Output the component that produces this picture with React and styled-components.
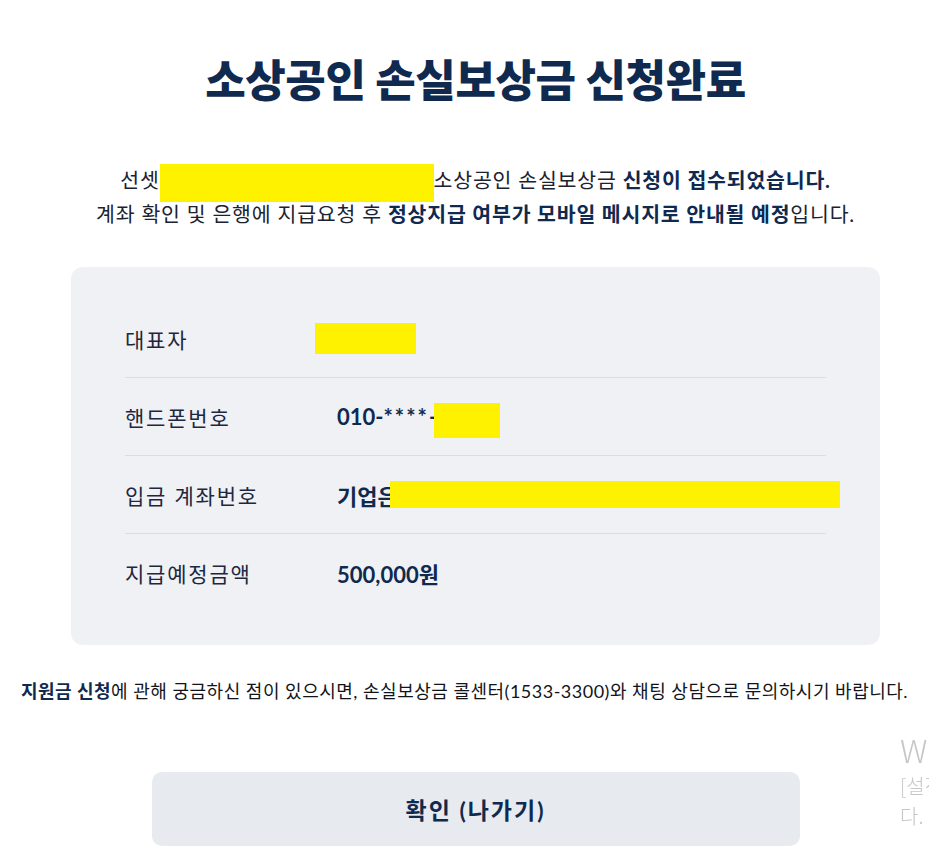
import React from "react";
import styled, { createGlobalStyle } from "styled-components";

const Global = createGlobalStyle`
  html, body {
    margin: 0;
    padding: 0;
    background: #ffffff;
    overflow: hidden;
  }
  body {
    font-family: "Lato", "Noto Sans CJK KR", sans-serif;
    color: #1b2230;
    -webkit-font-smoothing: antialiased;
  }
`;

const Page = styled.div`
  width: 929px;
  height: 863px;
  padding-top: 52px;
  box-sizing: border-box;
  display: flex;
  flex-direction: column;
`;

const Main = styled.div`
  padding-left: 22px;
  display: flex;
  flex-direction: column;
  align-items: center;
`;

const Title = styled.h1`
  margin: 0;
  font-size: 44px;
  line-height: 57px;
  font-weight: 800;
  color: #10294f;
  letter-spacing: -0.4px;
`;

const Intro = styled.p`
  margin: 54px 0 0;
  font-size: 20.5px;
  line-height: 34px;
  text-align: center;
  color: #1b2230;
  letter-spacing: 0.8px;
  white-space: nowrap;
`;

const Strong = styled.b`
  font-weight: 700;
  color: #10294f;
`;

const Redact = styled.span`
  display: inline-block;
  position: relative;
  top: ${(p) => p.$dy || 0}px;
  background: #fff200;
  width: ${(p) => p.$w}px;
  height: ${(p) => p.$h}px;
  margin-left: ${(p) => p.$ml || 0}px;
  vertical-align: middle;
  margin-top: -6px;
  margin-bottom: -6px;
`;

const Card = styled.section`
  margin-top: 36px;
  width: 809px;
  box-sizing: border-box;
  padding: 33px 54px;
  background: #eff1f4;
  border-radius: 12px;
  display: flex;
  flex-direction: column;
`;

const Row = styled.div`
  height: 78px;
  box-sizing: border-box;
  display: flex;
  align-items: center;
  border-bottom: ${(p) => (p.$last ? "none" : "1px solid #dadde2")};
`;

const Label = styled.div`
  width: 212px;
  flex-shrink: 0;
  font-size: 21px;
  color: #1d2740;
  letter-spacing: 1.8px;
`;

const Value = styled.div`
  font-size: 22px;
  font-weight: 700;
  color: #10294f;
  display: flex;
  align-items: center;
  white-space: nowrap;
`;

const Stars = styled.span`
  letter-spacing: 2px;
`;

const Note = styled.p`
  margin: 34px 0 0;
  font-size: 18px;
  line-height: 24px;
  text-align: center;
  color: #111419;
  letter-spacing: 0.5px;
  white-space: nowrap;
`;

const ButtonWrap = styled.div`
  padding-left: 22px;
  margin-top: 69px;
  display: flex;
  justify-content: center;
`;

const Button = styled.button`
  width: 648px;
  height: 74px;
  border: none;
  border-radius: 10px;
  background: #e7eaee;
  font-family: inherit;
  font-size: 23px;
  font-weight: 700;
  color: #10294f;
  letter-spacing: 2px;
  cursor: pointer;
`;

const Watermark = styled.div`
  position: fixed;
  left: 900px;
  top: 727px;
  color: #c6c6c6;
  font-family: "Noto Sans CJK KR", sans-serif;
  white-space: nowrap;
  pointer-events: none;
`;

const WmTitle = styled.div`
  font-size: 32px;
  line-height: 44px;
  font-weight: 300;
`;

const WmText = styled.div`
  font-size: 20px;
  line-height: 30px;
  font-weight: 300;
`;

export default function App() {
  return (
    <>
      <Global />
      <Page>
        <Main>
          <Title>소상공인 손실보상금 신청완료</Title>
          <Intro>
            선셋
            <Redact $w={274} $h={38} />
            소상공인 손실보상금 <Strong>신청이 접수되었습니다.</Strong>
            <br />
            계좌 확인 및 은행에 지급요청 후{" "}
            <Strong>정상지급 여부가 모바일 메시지로 안내될 예정</Strong>입니다.
          </Intro>
          <Card>
            <Row>
              <Label>대표자</Label>
              <Value>
                <Redact $w={101} $h={31} $ml={-22} />
              </Value>
            </Row>
            <Row>
              <Label>핸드폰번호</Label>
              <Value>
                010-<Stars>****</Stars>-
                <Redact $w={66} $h={35} $ml={-3} $dy={4} />
              </Value>
            </Row>
            <Row>
              <Label>입금 계좌번호</Label>
              <Value>
                기업은
                <Redact $w={450} $h={27} $ml={-8} />
              </Value>
            </Row>
            <Row $last>
              <Label>지급예정금액</Label>
              <Value>500,000원</Value>
            </Row>
          </Card>
        </Main>
        <Note>
          <Strong>지원금 신청</Strong>에 관해 궁금하신 점이 있으시면, 손실보상금
          콜센터(1533-3300)와 채팅 상담으로 문의하시기 바랍니다.
        </Note>
        <ButtonWrap>
          <Button type="button">확인 (나가기)</Button>
        </ButtonWrap>
      </Page>
      <Watermark>
        <WmTitle>Windows 정품 인증</WmTitle>
        <WmText>
          [설정]으로 이동하여 Windows를 정품 인증합니
          <br />
          다.
        </WmText>
      </Watermark>
    </>
  );
}
